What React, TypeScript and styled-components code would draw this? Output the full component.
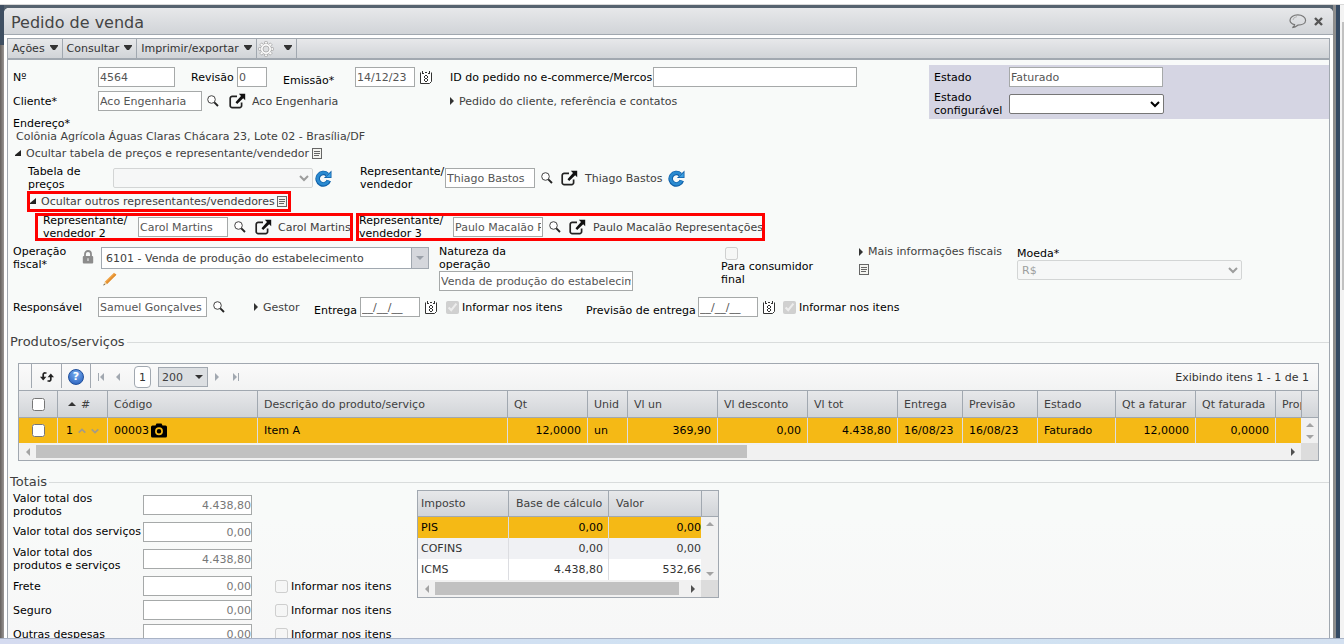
import React from 'react';
import styled, { createGlobalStyle, css } from 'styled-components';

const GlobalStyle = createGlobalStyle`
  * { box-sizing: border-box; }
  html, body { margin: 0; padding: 0; }
  body, button, input, select {
    font-family: 'DejaVu Sans', Verdana, sans-serif;
    font-size: 11px;
    line-height: 13px;
  }
  button { border: 0; padding: 0; background: none; color: inherit; cursor: pointer; }
`;

const line = '#a1a8b0';
const barFill = 'linear-gradient(#e7e8ea, #d1d4d8)';
const amber = '#f5b915';

/* ---------- window frame ---------- */

const Screen = styled.div`
  display: flex;
  flex-direction: column;
  height: 100vh;
  background: #56636f;
  overflow: hidden;
`;
const TopStrip = styled.div`
  flex: none;
  height: 5px;
  background: #fff;
  border-bottom: 1px solid #d9d9d9;
`;
const Desk = styled.div`
  display: flex;
  flex: 1;
  min-height: 0;
`;
const LeftEdge = styled.div`
  width: 4px;
  background: linear-gradient(#3f4f62 40px, transparent 40px), linear-gradient(90deg, #65605d, #9b9795);
`;
const RightEdge = styled.div`
  width: 7px;
  background: linear-gradient(90deg, #8d8d8d 3px, #354a63 3px);
`;
const PageScroll = styled.div`
  width: 4px;
  padding: 17px 0 0 2px;
  background: #f3f3f3;
`;
const PageThumb = styled.div`
  height: 268px;
  background: #c1c1c1;
`;
const Footer = styled.footer`
  flex: none;
  height: 6px;
  border-top: 1px solid #a9b3c6;
  background: linear-gradient(90deg, #d5dbf0, #cfe3f3 60%, #d3e0f0);
`;
const Win = styled.main`
  display: flex;
  flex: 1;
  flex-direction: column;
  min-width: 0;
  margin-top: 3px;
  background: #fff;
  border-radius: 5px 5px 0 0;
  overflow: hidden;
`;
const TitleBar = styled.header`
  display: flex;
  flex: none;
  align-items: center;
  gap: 7px;
  height: 27px;
  padding: 0 10px 0 7px;
  border-bottom: 1px solid ${line};
  background: ${barFill};
`;
const Title = styled.h1`
  flex: 1;
  margin: 0;
  padding-top: 3px;
  font-size: 16px;
  font-weight: 400;
  line-height: 20px;
  color: #444;
`;
const Panel = styled.section`
  display: flex;
  flex: 1;
  flex-direction: column;
  min-height: 0;
  margin: 3px 3px 0;
  border: 1px solid ${line};
  border-bottom: 0;
  background: linear-gradient(#f8faf9 80%, #f7f7f7);
  overflow: hidden;
`;
const MenuBar = styled.nav`
  display: flex;
  flex: none;
  height: 21px;
  border-bottom: 2px solid ${line};
  background: ${barFill};
`;
const MenuButton = styled.button<{ $icon?: boolean }>`
  display: flex;
  align-items: center;
  gap: ${(p) => (p.$icon ? 10 : 5)}px;
  padding: 0 4px 0 ${(p) => (p.$icon ? 1 : 4)}px;
  border-right: 1px solid ${line};
  color: #333;
`;

/* ---------- form parts ---------- */

const Form = styled.form`
  flex: none;
  padding-top: 5px;
`;
const TopArea = styled.div`
  display: flex;
  align-items: flex-start;
`;
const TopFields = styled.div`
  flex: 1;
  min-width: 0;
  padding: 2px 0 4px 5px;
`;
const Row = styled.div<{ $cols: string; $align?: string; $h?: number; $left?: number; $gap?: number }>`
  display: grid;
  grid-template-columns: ${(p) => p.$cols};
  align-items: ${(p) => p.$align || 'center'};
  height: ${(p) => p.$h || 20}px;
  grid-template-rows: 100%;
  padding-left: ${(p) => p.$left || 0}px;
  margin-bottom: ${(p) => p.$gap || 0}px;
  white-space: nowrap;
`;
const Label = styled.label<{ $low?: boolean; $wrap?: boolean }>`
  color: #000;
  ${(p) => p.$low && css`align-self: end;`}
  ${(p) => p.$wrap && css`display: block; white-space: pre-line;`}
`;
const Value = styled.span`
  color: #404040;
`;
const Address = styled.div`
  padding-left: 3px;
  color: #404040;
`;
const Caption = styled.div`
  margin-top: 6px;
  color: #000;
`;
const Field = styled.input<{ $w: number; $right?: boolean }>`
  width: ${(p) => p.$w}px;
  height: 20px;
  padding: 1px ${(p) => (p.$right ? 0 : 1)}px 0;
  border: 1px solid #a6a9a9;
  border-radius: 0;
  background: #fff;
  color: ${(p) => (p.$right ? '#777' : '#555')};
  text-align: ${(p) => (p.$right ? 'right' : 'left')};
  outline: 0;
`;
const Select = styled.select<{ $w: number }>`
  width: ${(p) => p.$w}px;
  height: 20px;
  border: 1px solid #767676;
  border-radius: 2px;
  background: #fff;
  color: #000;
  &:disabled {
    border-color: #c4c6c6;
    background: #f6f7f7;
    color: #777;
    opacity: 0.7;
  }
`;
const IconButton = styled.button`
  display: inline-flex;
  align-items: center;
  justify-content: flex-start;
  svg { display: block; }
`;
const Disclosure = styled.button`
  display: inline-flex;
  align-items: center;
  gap: 5px;
  color: #404040;
`;
const Check = styled.label`
  display: inline-flex;
  align-items: center;
  gap: 3px;
  color: #000;
  input { width: 13px; height: 13px; margin: 0; }
`;
const StateBox = styled.div`
  flex: none;
  display: grid;
  grid-template-columns: 75px 1fr;
  grid-template-rows: 20px 26px;
  align-items: center;
  row-gap: 4px;
  width: 400px;
  padding: 2px 0 2px 5px;
  background: #d5d5e3;
`;
const SectionLine = styled.div<{ $left: number }>`
  display: flex;
  align-items: center;
  gap: 3px;
  height: 13px;
  margin-bottom: 6px;
  padding-left: ${(p) => p.$left}px;
`;
const marked = css`
  outline: 3px solid #f00;
  outline-offset: -3px;
`;
const MarkedLine = styled.div`
  ${marked}
  display: flex;
  align-items: center;
  gap: 2px;
  width: 264px;
  height: 21px;
  margin-left: 19px;
  padding-left: 3px;
`;
const MarkedFields = styled.div<{ $cols: string; $w: number; $left: number }>`
  ${marked}
  display: grid;
  grid-template-columns: ${(p) => p.$cols};
  align-items: center;
  width: ${(p) => p.$w}px;
  height: 28px;
  padding-left: ${(p) => p.$left}px;
  white-space: nowrap;
`;
const MarkedRow = styled.div`
  display: flex;
  gap: 3px;
  margin: 1px 0 4px;
  padding-left: 27px;
`;
const Stack = styled.div<{ $gap?: number; $top?: number }>`
  display: flex;
  flex-direction: column;
  align-items: flex-start;
  gap: ${(p) => p.$gap || 0}px;
  padding-top: ${(p) => p.$top || 0}px;
`;
const Combo = styled.div`
  display: flex;
  width: 328px;
  height: 22px;
  border: 1px solid ${line};
  background: #fff;
  input {
    flex: 1;
    min-width: 0;
    padding: 0 4px;
    border: 0;
    background: none;
    color: #404040;
    outline: 0;
  }
  button {
    display: flex;
    align-items: center;
    justify-content: center;
    width: 17px;
    border-left: 1px solid ${line};
    background: #d5d7dc;
  }
`;
const CheckBlock = styled.div`
  display: flex;
  flex-direction: column;
  padding-top: 2px;
  input { width: 13px; height: 13px; margin: 0 4px; }
`;
const Legend = styled.h2<{ $top: number; $bottom: number }>`
  display: flex;
  align-items: center;
  gap: 2px;
  height: 16px;
  margin: ${(p) => p.$top}px 0 ${(p) => p.$bottom}px;
  padding-left: 2px;
  font-size: 13px;
  font-weight: 400;
  line-height: 16px;
  color: #404040;
  &::after { content: ''; flex: 1; border-top: 1px solid #d9dcdc; }
`;

/* ---------- item grid ---------- */

const Grid = styled.div`
  margin: 0 10px;
  border: 1px solid ${line};
  background: #fff;
`;
const GridTools = styled.div`
  display: flex;
  align-items: center;
  height: 26px;
  padding-left: 12px;
  background: linear-gradient(#fafafa, #f2f3f3);
`;
const ToolCell = styled.div<{ $w: number }>`
  display: flex;
  align-items: center;
  justify-content: center;
  align-self: flex-start;
  width: ${(p) => p.$w}px;
  height: 24px;
  padding-top: 2px;
  border-left: 1px solid ${line};
`;
const Help = styled.button`
  width: 16px;
  height: 16px;
  border: 1px solid #1f4f9c;
  border-radius: 50%;
  background: radial-gradient(circle at 50% 30%, #78aef0, #2259b8);
  color: #fff;
  font-weight: 700;
  line-height: 14px;
`;
const Pager = styled.div`
  display: flex;
  align-items: center;
  align-self: flex-start;
  flex: 1;
  height: 24px;
  padding: 2px 0 0 7px;
  border-left: 1px solid ${line};
`;
const PageStep = styled.button`
  display: flex;
  width: 18px;
`;
const PageNumber = styled.button`
  width: 17px;
  height: 22px;
  border: 1px solid ${line};
  border-radius: 4px;
  background: #fff;
  color: #333;
`;
const PageSize = styled.select`
  width: 50px;
  height: 20px;
  margin: 0 7px;
  padding: 0 3px;
  border: 1px solid ${line};
  border-radius: 0;
  appearance: none;
  background:
    url("data:image/svg+xml,%3Csvg xmlns='http://www.w3.org/2000/svg' width='8' height='4'%3E%3Cpath d='M0 0h8L4 4z' fill='%23333'/%3E%3C/svg%3E") right 4px center no-repeat,
    #dcdfe2;
  color: #404040;
`;
const Showing = styled.span`
  padding-right: 9px;
  color: #333;
`;
const TableFrame = styled.div`
  display: grid;
  grid-template-columns: minmax(0, 1fr) 17px;
`;
const Clip = styled.div`
  overflow: hidden;
`;
const Table = styled.table<{ $head: number }>`
  width: 100%;
  table-layout: fixed;
  border-collapse: separate;
  border-spacing: 0;
  th, td {
    padding: 0 6px;
    border-right: 1px solid #dcdde1;
    font-weight: 400;
    text-align: left;
    white-space: nowrap;
    overflow: hidden;
  }
  th {
    height: ${(p) => p.$head}px;
    border-right-color: ${line};
    border-top: 1px solid ${line};
    border-bottom: 1px solid ${line};
    background: ${barFill};
    color: #404040;
  }
  th:last-child { border-right: 0; }
  td:last-child { border-right: 0; }
  input { display: block; width: 13px; height: 13px; margin: 0 auto; }
`;
const Td = styled.td<{ $right?: boolean; $tight?: boolean }>`
  && { text-align: ${(p) => (p.$right ? 'right' : 'left')}; }
  && { ${(p) => p.$tight && 'padding-right: 0;'} }
`;
const ItemRow = styled.tr`
  height: 25px;
  background: ${amber};
  color: #000;
`;
const Inline = styled.span<{ $gap: number; $left?: number }>`
  display: flex;
  align-items: center;
  gap: ${(p) => p.$gap}px;
  padding-left: ${(p) => p.$left || 0}px;
`;
const ScrollHead = styled.div<{ $h: number }>`
  height: ${(p) => p.$h}px;
  border: solid ${line};
  border-width: 1px 0 1px 1px;
  background: ${barFill};
`;
const ScrollSide = styled.div`
  display: flex;
  flex-direction: column;
`;
const VBar = styled.div`
  display: flex;
  flex: 1;
  flex-direction: column;
  align-items: center;
  justify-content: space-between;
  padding: 5px 0 4px;
  background: #f1f1f1;
`;
const HBar = styled.div`
  display: grid;
  grid-template-columns: 17px minmax(0, 1fr) 17px 17px;
  align-items: center;
  justify-items: center;
  height: 17px;
  background: #f1f1f1;
`;
const HTrack = styled.div`
  width: 100%;
  height: 13px;
`;
const HThumb = styled.div<{ $w: number }>`
  width: ${(p) => p.$w}%;
  height: 13px;
  background: #c1c1c1;
`;
const Corner = styled.div`
  width: 17px;
  height: 17px;
  background: #dcdcdc;
`;

/* ---------- totals ---------- */

const Totals = styled.div`
  display: flex;
  padding-left: 5px;
`;
const TotalList = styled.div`
  width: 404px;
  padding-top: 1px;
`;
const TotalRow = styled.div<{ $tall?: boolean }>`
  display: grid;
  grid-template-columns: 130px 132px 1fr;
  height: ${(p) => (p.$tall ? 27 : 24)}px;
  align-items: center;
  padding-top: ${(p) => (p.$tall ? 0 : 4)}px;
  white-space: nowrap;
`;
const TaxBox = styled.div`
  width: 302px;
  height: 108px;
  border: 1px solid ${line};
  border-top: 0;
  th, td { padding: 0 5px 0 3px; }
  th + th { padding-left: 7px; }
`;
const TaxRow = styled.tr<{ $bg: string; $dark?: boolean }>`
  height: 21px;
  background: ${(p) => p.$bg};
  color: ${(p) => (p.$dark ? '#000' : '#333')};
`;

/* ---------- icons ---------- */

const Tri = ({ dir = 'down', size = 8, color = '#333' }: { dir?: string; size?: number; color?: string }) => {
  const half = size / 2;
  const wide = dir === 'down' || dir === 'up';
  const shapes: Record<string, string> = {
    down: `M0 0H${size}L${half} ${half}Z`,
    up: `M0 ${half}H${size}L${half} 0Z`,
    right: `M0 0V${size}L${half} ${half}Z`,
    left: `M${half} 0V${size}L0 ${half}Z`,
  };
  return (
    <svg width={wide ? size : half} height={wide ? half : size} aria-hidden>
      <path d={shapes[dir]} fill={color} />
    </svg>
  );
};
const MenuArrow = () => (
  <svg width="8" height="7" aria-hidden><path d="M0 0H8V1L5 5H3L0 1Z" fill="#333" /></svg>
);
const OpenMark = () => (
  <svg width="6" height="7" aria-hidden><path d="M6 0V6H0V5Z" fill="#222" /></svg>
);
const Search = () => (
  <svg width="12" height="12" viewBox="0 0 12 12" fill="none" aria-hidden>
    <circle cx="4.500" cy="4.500" r="3.800" stroke="#444" strokeWidth="1" fill="#fff" />
    <path d="M7.300 7.300L11 11" stroke="#222" strokeWidth="1.900" />
  </svg>
);
const External = () => (
  <svg width="17" height="16" viewBox="0 0 17 16" fill="none" aria-hidden>
    <path d="M8 3.400H3.500A2 2 0 0 0 1.200 5.500V12.500A2 2 0 0 0 3.300 14.600H10.500A2 2 0 0 0 12.600 12.500V9.500" stroke="#222" strokeWidth="1.700" />
    <path d="M9.800 .8H16.200V7.200L14.200 5.200L8.200 11L6.500 9.300L12 3Z" fill="#111" />
  </svg>
);
const Reload = () => (
  <svg width="17" height="17" viewBox="0 0 17 17" fill="none" aria-hidden>
    <path d="M12.300 4.600A5.700 5.700 0 1 0 13.800 10.500" stroke="#0f5fa8" strokeWidth="4.600" />
    <path d="M16.500 .4V8H8.900Z" fill="#0f5fa8" />
    <path d="M12.500 4.600A5.700 5.700 0 1 0 13.500 10.700" stroke="#2a8ad0" strokeWidth="2.800" />
    <path d="M15.700 2.400V7.200H10.900Z" fill="#3b9fe2" />
  </svg>
);
const Note = () => (
  <svg width="10" height="11" viewBox="0 0 10 11" fill="none" aria-hidden>
    <rect x=".5" y=".5" width="9" height="10" stroke="#666" fill="#f4f4f0" />
    <path d="M2 3.500H8M2 5.500H8M2 7.500H7" stroke="#666" />
  </svg>
);
const Calendar = () => (
  <svg width="12" height="13" viewBox="0 0 12 13" fill="none" aria-hidden>
    <path d="M.5 1.500H11.500V10L9.500 12.500H.5Z" fill="#fff" />
    <path d="M.5 1.500V12.500H9.500L11.500 10.500V1.500M2 2.500H4M5 1.500H7M8 2.500H10" stroke="#333" />
    <path d="M2.500 0V2M9.500 0V2" stroke="#333" />
    <path d="M5 4.500H7M5 7.500H7M5 10.500H7M4.500 5V7M7.500 5V7M4.500 8V10M7.500 8V10" stroke="#333" />
  </svg>
);
const Lock = () => (
  <svg width="12" height="14" viewBox="0 0 12 14" fill="none" aria-hidden>
    <path d="M3 6.500V4A3 3 0 0 1 9 4V6.500" stroke="#8c8c8c" strokeWidth="1.800" />
    <rect x=".8" y="6" width="10.400" height="7.500" rx="1" fill="#8c8c8c" />
    <path d="M6 8.300V11" stroke="#e6e6e6" strokeWidth="1.200" />
  </svg>
);
const Pencil = () => (
  <svg width="17" height="14" viewBox="-2 0 17 14" aria-hidden>
    <path d="M1.800 9.800L11 .8L13.300 2.800L4 12Z" fill="#f0a040" />
    <path d="M2.800 10.900L12.200 1.800L13.300 2.800L4 12Z" fill="#e08e30" />
    <path d="M1.800 9.800L4 12L.4 13.400Z" fill="#e9cfa0" />
    <path d="M1 11.800L2 12.800L.4 13.400Z" fill="#444" />
  </svg>
);
const Gear = () => {
  const teeth = Array.from({ length: 8 }, (_, i) => (
    <rect key={i} x="6.500" y=".6" width="3" height="3.500" rx=".6" transform={`rotate(${i * 45} 8 8)`} />
  ));
  return (
    <svg width="16" height="16" viewBox="0 0 16 16" aria-hidden>
      <g fill="#fafafa" stroke="#a6a6a6" strokeWidth=".8">{teeth}<circle cx="8" cy="8" r="5.200" /></g>
      <circle cx="8" cy="8" r="4.900" fill="#fafafa" />
      <circle cx="8" cy="8" r="3" fill="#dcdee0" stroke="#a6a6a6" strokeWidth=".8" />
    </svg>
  );
};
const Comment = () => (
  <svg width="18" height="15" viewBox="0 0 18 15" fill="none" aria-hidden>
    <path d="M5.600 10.600C2.600 9.800 1 8.200 1 6.200C1 3.200 4.400 .9 8.800 .9C13.200 .9 16.600 3.200 16.600 6.200C16.600 9.200 13.200 11.200 8.800 11.200C7.500 12.400 5.600 13.500 3.400 13.600C4.800 12.800 5.400 12 5.600 10.600Z" stroke="#777" strokeWidth="1.200" />
    <path d="M4 6A5.500 3.500 0 0 1 8 2.600" stroke="#aaa" strokeWidth=".8" />
  </svg>
);
const Close = () => (
  <svg width="9" height="9" viewBox="0 0 9 9" aria-hidden>
    <path d="M1 1L8 8M8 1L1 8" stroke="#555" strokeWidth="2.400" />
  </svg>
);
const Swap = () => (
  <svg width="14" height="10" viewBox="0 0 14 10" fill="none" aria-hidden>
    <path d="M6.500 1H5A1.500 1.500 0 0 0 3.200 2.500V7" stroke="#222" strokeWidth="1.700" />
    <path d="M0 4.800H6.400L3.200 8.600Z" fill="#222" />
    <path d="M7.500 9H9A1.500 1.500 0 0 0 10.800 7.500V3" stroke="#222" strokeWidth="1.700" />
    <path d="M7.600 5.200H14L10.800 1.400Z" fill="#222" />
  </svg>
);
const Camera = () => (
  <svg width="16" height="15" viewBox="0 0 16 15" aria-hidden>
    <path d="M1.500 2.500H4.500L5.500 .5H10.500L11.500 2.500H14.500A1.500 1.500 0 0 1 16 4V13A1.500 1.500 0 0 1 14.500 14.500H1.500A1.500 1.500 0 0 1 0 13V4A1.500 1.500 0 0 1 1.500 2.500Z" fill="#000" />
    <circle cx="8" cy="8.300" r="3.100" fill="none" stroke={amber} strokeWidth="1.700" />
  </svg>
);
const Chevron = ({ up }: { up?: boolean }) => (
  <svg width="8" height="6" viewBox="0 0 8 6" fill="none" aria-hidden>
    <path d={up ? 'M.7 4.700L4 1.500L7.300 4.700' : 'M.7 1.300L4 4.500L7.300 1.300'} stroke="#a39b88" strokeWidth="1.700" />
  </svg>
);
const EdgeStep = ({ last }: { last?: boolean }) => (
  <svg width="7" height="8" aria-hidden>
    {last ? <path d="M0 0L4 4L0 8ZM5 0H6V8H5Z" fill="#a1a8b0" /> : <path d="M6 0L2 4L6 8ZM0 0H1V8H0Z" fill="#a1a8b0" />}
  </svg>
);

/* ---------- data ---------- */

const columns: { title: string; w?: number; value: string; right?: boolean }[] = [
  { title: 'Descrição do produto/serviço', w: 250, value: 'Item A' },
  { title: 'Qt', w: 80, value: '12,0000', right: true },
  { title: 'Unid', w: 40, value: 'un' },
  { title: 'Vl un', w: 90, value: '369,90', right: true },
  { title: 'Vl desconto', w: 90, value: '0,00', right: true },
  { title: 'Vl tot', w: 90, value: '4.438,80', right: true },
  { title: 'Entrega', w: 65, value: '16/08/23' },
  { title: 'Previsão', w: 75, value: '16/08/23' },
  { title: 'Estado', w: 78, value: 'Faturado' },
  { title: 'Qt a faturar', w: 80, value: '12,0000', right: true },
  { title: 'Qt faturada', w: 80, value: '0,0000', right: true },
  { title: 'Prop', value: '' },
];

const totals = [
  { id: 'tp', label: 'Valor total dos\nprodutos', value: '4.438,80', tall: true },
  { id: 'ts', label: 'Valor total dos serviços', value: '0,00', tall: true },
  { id: 'tps', label: 'Valor total dos\nprodutos e serviços', value: '4.438,80', tall: true },
  { id: 'fr', label: 'Frete', value: '0,00', check: true },
  { id: 'se', label: 'Seguro', value: '0,00', check: true },
  { id: 'od', label: 'Outras despesas', value: '0,00', check: true },
];

const taxes = [
  { name: 'PIS', base: '0,00', value: '0,00', bg: amber, dark: true },
  { name: 'COFINS', base: '0,00', value: '0,00', bg: '#f0f1f4' },
  { name: 'ICMS', base: '4.438,80', value: '532,66', bg: '#fff' },
];

const SearchButton = () => <IconButton type="button" aria-label="Pesquisar"><Search /></IconButton>;
const OpenButton = () => <IconButton type="button" aria-label="Abrir cadastro"><External /></IconButton>;
const ReloadButton = () => <IconButton type="button" aria-label="Atualizar"><Reload /></IconButton>;
const NoteButton = () => <IconButton type="button" aria-label="Observações"><Note /></IconButton>;
const DateButton = () => <IconButton type="button" aria-label="Calendário"><Calendar /></IconButton>;

export default function App() {
  return (
    <Screen>
      <GlobalStyle />
      <TopStrip />
      <Desk>
        <LeftEdge />
        <Win>
          <TitleBar>
            <Title>Pedido de venda</Title>
            <IconButton aria-label="Comentários"><Comment /></IconButton>
            <IconButton aria-label="Fechar"><Close /></IconButton>
          </TitleBar>
          <Panel>
            <MenuBar>
              <MenuButton>Ações <MenuArrow /></MenuButton>
              <MenuButton>Consultar <MenuArrow /></MenuButton>
              <MenuButton>Imprimir/exportar <MenuArrow /></MenuButton>
              <MenuButton $icon aria-label="Configurações"><Gear /><MenuArrow /></MenuButton>
            </MenuBar>
            <Form>
              <TopArea>
                <TopFields>
                  <Row $cols="85px 93px 46px 46px 72px 65px 30px 203px 204px" $gap={4}>
                    <Label htmlFor="num">Nº</Label>
                    <Field id="num" $w={77} defaultValue="4564" />
                    <Label htmlFor="rev">Revisão</Label>
                    <Field id="rev" $w={30} defaultValue="0" />
                    <Label $low htmlFor="emi">Emissão*</Label>
                    <Field id="emi" $w={60} defaultValue="14/12/23" />
                    <DateButton />
                    <Label htmlFor="idp">ID do pedido no e-commerce/Mercos</Label>
                    <Field id="idp" $w={204} />
                  </Row>
                  <Row $cols="85px 109px 22px 23px 198px auto">
                    <Label htmlFor="cli">Cliente*</Label>
                    <Field id="cli" $w={104} defaultValue="Aco Engenharia" />
                    <SearchButton />
                    <OpenButton />
                    <Value>Aco Engenharia</Value>
                    <Disclosure type="button"><Tri dir="right" />Pedido do cliente, referência e contatos</Disclosure>
                  </Row>
                  <Caption>Endereço*</Caption>
                  <Address>Colônia Agrícola Águas Claras Chácara 23, Lote 02 - Brasília/DF</Address>
                </TopFields>
                <StateBox>
                  <Label htmlFor="est">Estado</Label>
                  <Field id="est" $w={154} defaultValue="Faturado" />
                  <Label $wrap htmlFor="esc">{'Estado\nconfigurável'}</Label>
                  <Select id="esc" $w={155} />
                </StateBox>
              </TopArea>

              <SectionLine $left={7}>
                <Disclosure type="button"><OpenMark />Ocultar tabela de preços e representante/vendedor</Disclosure>
                <NoteButton />
              </SectionLine>

              <Row $cols="85px 202px 45px 85px 96px 20px 24px 83px auto" $left={20} $h={24} $gap={1}>
                <Label $wrap htmlFor="tab">{'Tabela de\npreços'}</Label>
                <Select id="tab" $w={200} disabled />
                <ReloadButton />
                <Label $wrap htmlFor="rep">{'Representante/\nvendedor'}</Label>
                <Field id="rep" $w={90} defaultValue="Thiago Bastos" />
                <SearchButton />
                <OpenButton />
                <Value>Thiago Bastos</Value>
                <ReloadButton />
              </Row>

              <MarkedLine>
                <Disclosure type="button"><OpenMark />Ocultar outros representantes/vendedores</Disclosure>
                <NoteButton />
              </MarkedLine>
              <MarkedRow>
                <MarkedFields $w={318} $left={8} $cols="95px 96px 21px 23px auto">
                  <Label $wrap htmlFor="rep2">{'Representante/\nvendedor 2'}</Label>
                  <Field id="rep2" $w={90} defaultValue="Carol Martins" />
                  <SearchButton />
                  <OpenButton />
                  <Value>Carol Martins</Value>
                </MarkedFields>
                <MarkedFields $w={409} $left={3} $cols="94px 96px 20px 24px auto">
                  <Label $wrap htmlFor="rep3">{'Representante/\nvendedor 3'}</Label>
                  <Field id="rep3" $w={90} defaultValue="Paulo Macalão Representações" />
                  <SearchButton />
                  <OpenButton />
                  <Value>Paulo Macalão Representações</Value>
                </MarkedFields>
              </MarkedRow>

              <Row $cols="69px 19px 338px 282px 138px 158px 225px" $left={5} $h={52} $align="start">
                <Label $wrap htmlFor="ope">{'Operação\nfiscal*'}</Label>
                <Stack $top={5}><Lock /></Stack>
                <Stack $gap={3} $top={2}>
                  <Combo>
                    <input id="ope" defaultValue="6101 - Venda de produção do estabelecimento" />
                    <button type="button" aria-label="Abrir lista"><Tri color="#9aa0a8" /></button>
                  </Combo>
                  <IconButton type="button" aria-label="Editar"><Pencil /></IconButton>
                </Stack>
                <Stack>
                  <Label $wrap htmlFor="nat">{'Natureza da\noperação'}</Label>
                  <Field id="nat" $w={194} defaultValue="Venda de produção do estabelecimento" />
                </Stack>
                <CheckBlock>
                  <input id="pcf" type="checkbox" disabled />
                  <Label $wrap htmlFor="pcf">{'Para consumidor\nfinal'}</Label>
                </CheckBlock>
                <Stack $gap={6}>
                  <Disclosure type="button"><Tri dir="right" />Mais informações fiscais</Disclosure>
                  <NoteButton />
                </Stack>
                <Stack $top={2}>
                  <Label htmlFor="moe">Moeda*</Label>
                  <Select id="moe" $w={225} disabled><option>R$</option></Select>
                </Stack>
              </Row>

              <Row $cols="85px 115px 41px 60px 46px 65px 21px 140px 112px 65px 20px auto" $left={5}>
                <Label htmlFor="res">Responsável</Label>
                <Field id="res" $w={109} defaultValue="Samuel Gonçalves" />
                <SearchButton />
                <Disclosure type="button"><Tri dir="right" />Gestor</Disclosure>
                <Label $low htmlFor="ent">Entrega</Label>
                <Field id="ent" $w={60} defaultValue="__/__/__" />
                <DateButton />
                <Check><input type="checkbox" defaultChecked disabled />Informar nos itens</Check>
                <Label $low htmlFor="pre">Previsão de entrega</Label>
                <Field id="pre" $w={60} defaultValue="__/__/__" />
                <DateButton />
                <Check><input type="checkbox" defaultChecked disabled />Informar nos itens</Check>
              </Row>

              <Legend $top={17} $bottom={13}>Produtos/serviços</Legend>
              <Grid>
                <GridTools>
                  <ToolCell $w={30}><IconButton type="button" aria-label="Recarregar"><Swap /></IconButton></ToolCell>
                  <ToolCell $w={29}><Help type="button">?</Help></ToolCell>
                  <Pager>
                    <PageStep type="button" aria-label="Primeira"><EdgeStep /></PageStep>
                    <PageStep type="button" aria-label="Anterior"><Tri dir="left" color={line} /></PageStep>
                    <PageNumber type="button">1</PageNumber>
                    <PageSize aria-label="Itens por página"><option>200</option></PageSize>
                    <PageStep type="button" aria-label="Próxima"><Tri dir="right" color={line} /></PageStep>
                    <PageStep type="button" aria-label="Última"><EdgeStep last /></PageStep>
                  </Pager>
                  <Showing>Exibindo itens 1 - 1 de 1</Showing>
                </GridTools>
                <TableFrame>
                  <Clip>
                    <Table $head={28}>
                      <colgroup>
                        <col style={{ width: 39 }} />
                        <col style={{ width: 50 }} />
                        <col style={{ width: 150 }} />
                        {columns.map((c) => <col key={c.title} style={{ width: c.w }} />)}
                      </colgroup>
                      <thead>
                        <tr>
                          <th><input type="checkbox" aria-label="Selecionar todos" /></th>
                          <th><Inline $gap={5} $left={4}><Tri dir="up" />#</Inline></th>
                          <th>Código</th>
                          {columns.map((c) => <th key={c.title}>{c.title}</th>)}
                        </tr>
                      </thead>
                      <tbody>
                        <ItemRow>
                          <td><input type="checkbox" aria-label="Selecionar item" /></td>
                          <Td $tight><Inline $gap={5} $left={2}>1<Chevron up /><Chevron /></Inline></Td>
                          <td><Inline $gap={2}>00003<Camera /></Inline></td>
                          {columns.map((c) => <Td key={c.title} $right={c.right} $tight={!c.right}>{c.value}</Td>)}
                        </ItemRow>
                      </tbody>
                    </Table>
                  </Clip>
                  <ScrollSide>
                    <ScrollHead $h={28} />
                    <VBar><Tri dir="up" color="#a3a3a3" /><Tri color="#a3a3a3" /></VBar>
                  </ScrollSide>
                </TableFrame>
                <HBar>
                  <Tri dir="left" color="#a3a3a3" />
                  <HTrack><HThumb $w={57} /></HTrack>
                  <Tri dir="right" color="#505050" />
                  <Corner />
                </HBar>
              </Grid>

              <Legend $top={13} $bottom={0}>Totais</Legend>
              <Totals>
                <TotalList>
                  {totals.map((t) => (
                    <TotalRow key={t.id} $tall={t.tall}>
                      <Label $wrap htmlFor={t.id}>{t.label}</Label>
                      <Field id={t.id} $w={109} $right defaultValue={t.value} />
                      {t.check && <Check><input type="checkbox" disabled />Informar nos itens</Check>}
                    </TotalRow>
                  ))}
                </TotalList>
                <TaxBox>
                  <TableFrame>
                    <Clip>
                      <Table $head={27}>
                        <colgroup>
                          <col style={{ width: 91 }} />
                          <col style={{ width: 100 }} />
                          <col />
                        </colgroup>
                        <thead>
                          <tr><th>Imposto</th><th>Base de cálculo</th><th>Valor</th></tr>
                        </thead>
                        <tbody>
                          {taxes.map((t) => (
                            <TaxRow key={t.name} $bg={t.bg} $dark={t.dark}>
                              <td>{t.name}</td>
                              <Td $right>{t.base}</Td>
                              <Td $right $tight>{t.value}</Td>
                            </TaxRow>
                          ))}
                        </tbody>
                      </Table>
                    </Clip>
                    <ScrollSide>
                      <ScrollHead $h={27} />
                      <VBar><Tri dir="up" color="#a3a3a3" /><Tri color="#a3a3a3" /></VBar>
                    </ScrollSide>
                  </TableFrame>
                  <HBar>
                    <Tri dir="left" color="#a3a3a3" />
                    <HTrack><HThumb $w={98} /></HTrack>
                    <Tri dir="right" color="#505050" />
                    <Corner />
                  </HBar>
                </TaxBox>
              </Totals>
            </Form>
          </Panel>
        </Win>
        <RightEdge />
        <PageScroll><PageThumb /></PageScroll>
      </Desk>
      <Footer />
    </Screen>
  );
}
